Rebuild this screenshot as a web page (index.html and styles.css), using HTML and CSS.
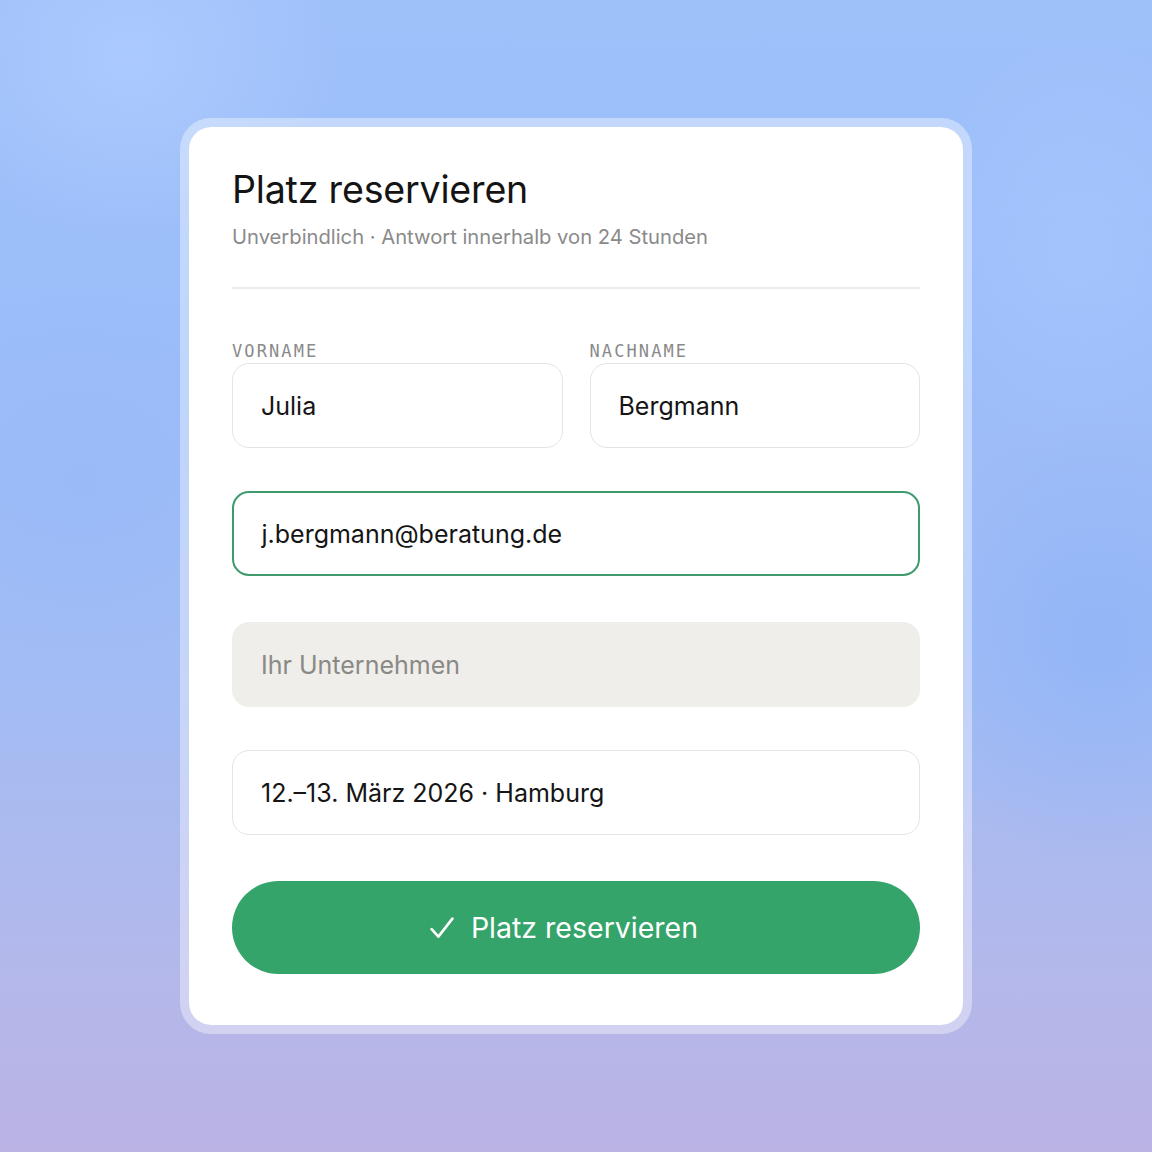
FILE: index.html
```html
<!DOCTYPE html>
<html lang="de">
<head>
<meta charset="utf-8">
<title>Platz reservieren</title>
<link rel="stylesheet" href="styles.css">
</head>
<body>
<main class="stage">
  <form class="card">
    <header class="head">
      <h1 class="title">Platz reservieren</h1>
      <p class="subtitle">Unverbindlich · Antwort innerhalb von 24 Stunden</p>
    </header>
    <div class="divider"></div>
    <div class="row">
      <label class="field">
        <span class="label">VORNAME</span>
        <span class="input">Julia</span>
      </label>
      <label class="field">
        <span class="label">NACHNAME</span>
        <span class="input">Bergmann</span>
      </label>
    </div>
    <div class="input focus">j.bergmann@beratung.de</div>
    <div class="input muted">Ihr Unternehmen</div>
    <div class="input date">12.–13. März 2026 · Hamburg</div>
    <button type="button" class="btn">
      <svg class="check" width="24" height="22" viewBox="0 0 24 22" aria-hidden="true"><path d="M1.6 12.2 L8.4 19.6 L22.4 1.6" fill="none" stroke="#fff" stroke-width="2.6" stroke-linecap="round" stroke-linejoin="round"/></svg>
      <span>Platz reservieren</span>
    </button>
  </form>
</main>
</body>
</html>
```
FILE: styles.css
```css
* { box-sizing: border-box; }
html, body { margin: 0; padding: 0; }
body {
  font-family: Inter, "Noto Sans", "Liberation Sans", sans-serif;
  min-height: 100vh;
  background:
    radial-gradient(ellipse 300px 260px at 130px 60px, rgba(180,208,255,0.6), rgba(180,208,255,0) 70%),
    radial-gradient(ellipse 260px 300px at 1080px 250px, rgba(170,200,255,0.55), rgba(170,200,255,0) 70%),
    radial-gradient(ellipse 320px 320px at 1100px 640px, rgba(138,178,248,0.65), rgba(138,178,248,0) 70%),
    radial-gradient(ellipse 300px 260px at 80px 480px, rgba(148,184,248,0.55), rgba(148,184,248,0) 70%),
    linear-gradient(180deg, #9fc1fa 0%, #9bbdf9 30%, #a3bcf4 60%, #b4b8ea 85%, #bab3e4 100%);
}
.stage {
  min-height: 100vh;
  display: flex;
  align-items: center;
  justify-content: center;
}
.card {
  width: 792px;
  background: #fff;
  background-clip: padding-box;
  border: 9px solid rgba(255,255,255,0.38);
  border-radius: 31px;
  padding: 40px 43px 51px 43px;
  display: flex;
  flex-direction: column;
}
.head { display: flex; flex-direction: column; }
.title {
  margin: 0;
  font-size: 37.6px;
  line-height: 46px;
  font-weight: 400;
  color: #141414;
  letter-spacing: -0.2px;
}
.subtitle {
  margin: 12px 0 0;
  font-size: 20.2px;
  line-height: 24px;
  color: #8a8a8a;
}
.divider {
  height: 2px;
  background: #ebebeb;
  margin: 38px 0 52px;
}
.row {
  display: grid;
  grid-template-columns: 1fr 1fr;
  gap: 27px;
  margin-bottom: 43px;
}
.field { display: flex; flex-direction: column; }
.label {
  font-family: "DejaVu Sans Mono", "Liberation Mono", monospace;
  font-size: 17px;
  line-height: 20px;
  letter-spacing: 2.1px;
  color: #8a8a8a;
  margin-bottom: 2px;
}
.input {
  display: flex;
  align-items: center;
  height: 85px;
  padding: 0 28px;
  border: 1.5px solid #e4e4e4;
  border-radius: 17px;
  font-size: 25px;
  color: #151515;
  background: #fff;
}
.focus { border: 2px solid #3f9b6d; padding-left: 27.5px; margin-bottom: 46px; }
.muted {
  background: #efeeea;
  border-color: #efeeea;
  color: #8a8985;
  margin-bottom: 43px;
}
.date { margin-bottom: 46px; }
.btn {
  height: 93px;
  border: 0;
  border-radius: 47px;
  background: #34a46a;
  color: #fff;
  font-family: inherit;
  font-size: 28.5px;
  display: flex;
  align-items: center;
  justify-content: center;
  padding: 0 24px 0 0;
}
.check { margin-right: 17px; flex: none; }
```
